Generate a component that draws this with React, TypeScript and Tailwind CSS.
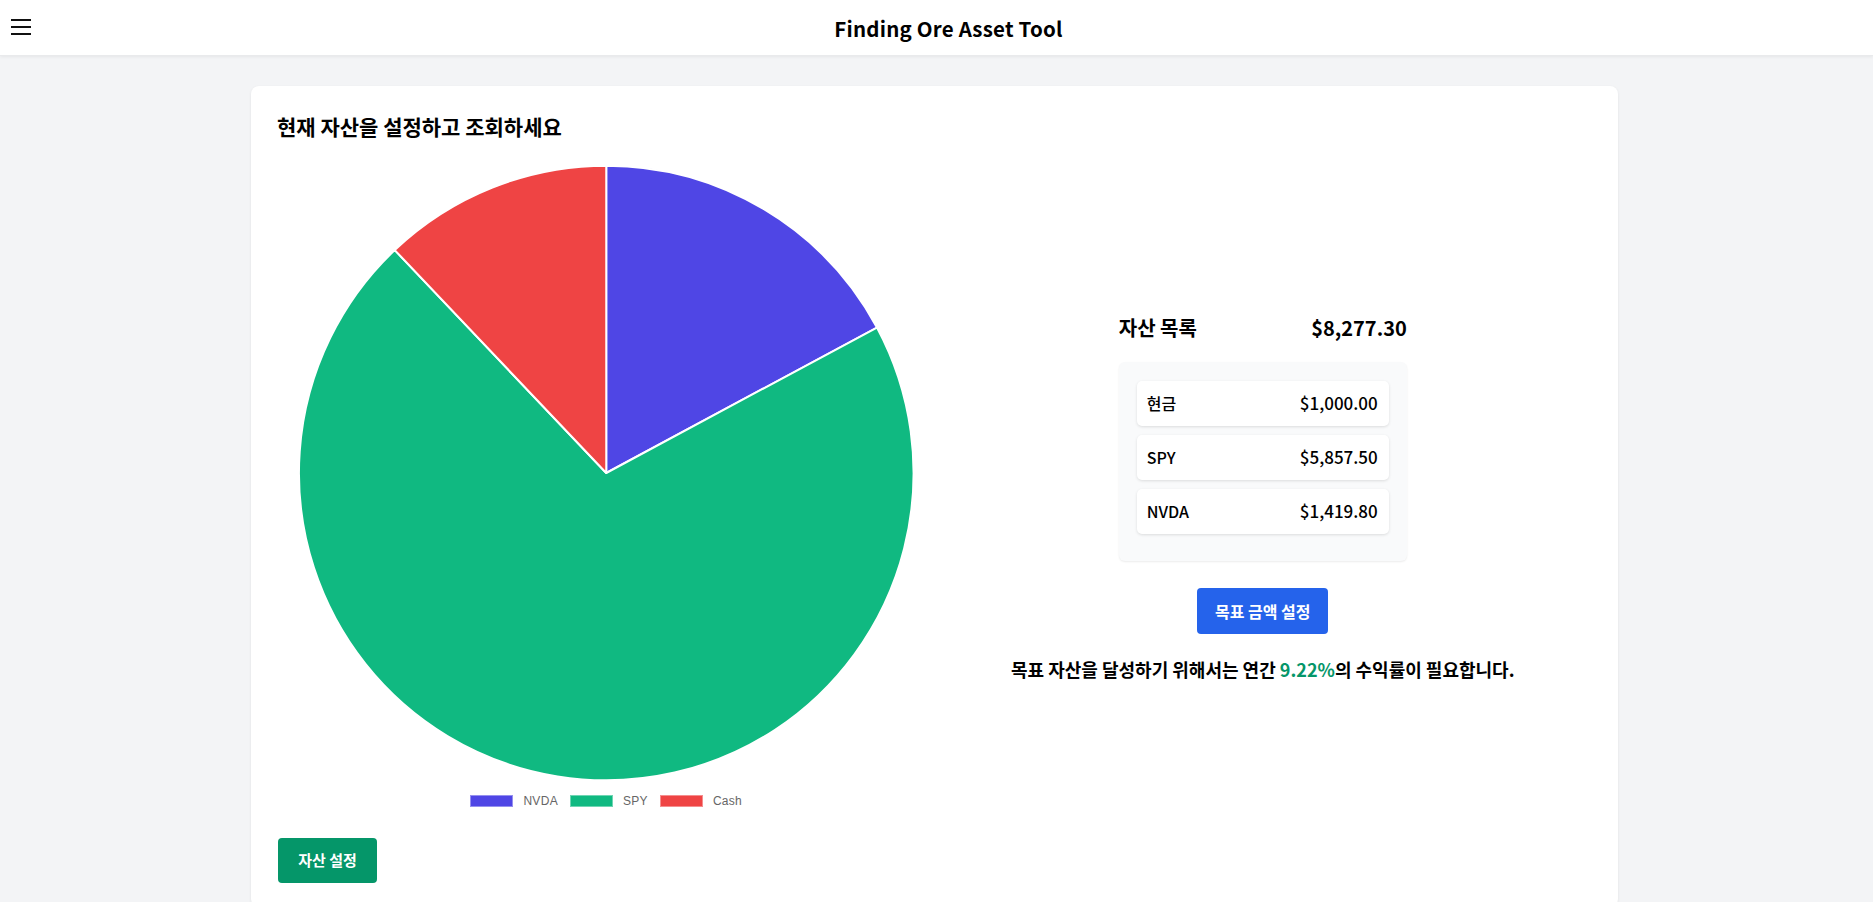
import React from "react";

const data = [
  { label: "NVDA", value: 1419.8, color: "#4F46E5" },
  { label: "SPY", value: 5857.5, color: "#10B981" },
  { label: "Cash", value: 1000.0, color: "#EF4444" },
];

function Pie() {
  const cx = 329;
  const cy = 310;
  const r = 308;
  const total = data.reduce((s, d) => s + d.value, 0);
  let acc = 0;
  const paths = data.map((d) => {
    const a0 = (acc / total) * Math.PI * 2;
    acc += d.value;
    const a1 = (acc / total) * Math.PI * 2;
    const x0 = cx + r * Math.sin(a0);
    const y0 = cy - r * Math.cos(a0);
    const x1 = cx + r * Math.sin(a1);
    const y1 = cy - r * Math.cos(a1);
    const large = a1 - a0 > Math.PI ? 1 : 0;
    return (
      <path
        key={d.label}
        d={`M ${cx} ${cy} L ${x0} ${y0} A ${r} ${r} 0 ${large} 1 ${x1} ${y1} Z`}
        fill={d.color}
        stroke="#ffffff"
        strokeWidth={2}
        strokeLinejoin="round"
      />
    );
  });
  return (
    <svg width={658} height={620} viewBox="0 0 658 620" className="block">
      {paths}
    </svg>
  );
}

const font = { fontFamily: '"Noto Sans CJK KR", "Noto Sans", sans-serif' };

export default function App() {
  return (
    <div className="min-h-screen bg-[#f3f4f6] text-black" style={font}>
      <header className="h-[56px] bg-white flex items-center border-b border-[#e9eaec] shadow-[0_1px_3px_rgba(0,0,0,0.06)]">
        <div className="w-[24px] shrink-0 h-full flex items-center">
          <svg width="20" height="18" viewBox="0 0 20 18" className="ml-[11px] shrink-0">
            <rect x="0" y="0" width="20" height="2" fill="#111" />
            <rect x="0" y="7" width="20" height="2" fill="#111" />
            <rect x="0" y="14" width="20" height="2" fill="#111" />
          </svg>
        </div>
        <div className="flex-1 text-center text-[20.5px] font-bold leading-[28px] tracking-[0.2px]">
          Finding Ore Asset Tool
        </div>
      </header>

      <main className="pt-[30px] pl-[251px]">
        <div className="w-[1367px] bg-white rounded-lg shadow-[0_1px_3px_rgba(0,0,0,0.08)] px-[27px] pt-[26px] pb-[24px] grid grid-cols-2 items-center">
          <div className="flex flex-col">
            <h2 className="text-[21px] font-bold leading-[28px] -ml-[1px]">현재 자산을 설정하고 조회하세요</h2>
            <div className="mt-[23px] flex justify-center">
              <Pie />
            </div>
            <div
              className="mt-[6px] h-[24px] flex items-center justify-center text-[12px] text-[#666]"
              style={{ fontFamily: '"Liberation Sans", Arial, sans-serif' }}
            >
              {data.map((d, i) => (
                <div key={d.label} className={`flex items-center ${i > 0 ? "ml-[12px]" : ""}`}>
                  <span
                    className="inline-block w-[43px] h-[12px] border border-white/40"
                    style={{ backgroundColor: d.color }}
                  />
                  <span className="ml-[10px] tracking-[0.3px]">{d.label}</span>
                </div>
              ))}
            </div>
            <div className="mt-[25px]">
              <button className="w-[99px] h-[45px] rounded-[4px] bg-[#059669] text-white text-[15px] font-bold">
                자산 설정
              </button>
            </div>
          </div>

          <div className="flex flex-col items-center">
            <div className="w-72">
              <div className="flex justify-between items-center h-[28px]">
                <span className="text-[20px] font-bold">자산 목록</span>
                <span className="text-[20px] font-bold">$8,277.30</span>
              </div>
              <div className="mt-[20px] bg-[#f9fafb] rounded-[6px] shadow-[0_1px_2px_rgba(0,0,0,0.08)] pt-[19px] px-[18px] pb-[27px] flex flex-col gap-[9px]">
                {[
                  ["현금", "$1,000.00"],
                  ["SPY", "$5,857.50"],
                  ["NVDA", "$1,419.80"],
                ].map(([n, v]) => (
                  <div
                    key={n}
                    className="h-[45px] bg-white rounded-[5px] shadow-[0_1px_3px_rgba(0,0,0,0.12)] flex items-center justify-between pl-[10px] pr-[11px] font-medium"
                  >
                    <span className="text-[16px]">{n}</span>
                    <span className="text-[17px]">{v}</span>
                  </div>
                ))}
              </div>
            </div>
            <button className="mt-[27px] w-[131px] h-[46px] rounded-[4px] bg-[#2563EB] text-white text-[16px] font-bold">
              목표 금액 설정
            </button>
            <p className="mt-[22px] text-[18px] font-bold leading-[26px]">
              목표 자산을 달성하기 위해서는 연간 <span className="text-[#059669]">9.22%</span>의 수익률이 필요합니다.
            </p>
          </div>
        </div>
      </main>
    </div>
  );
}
